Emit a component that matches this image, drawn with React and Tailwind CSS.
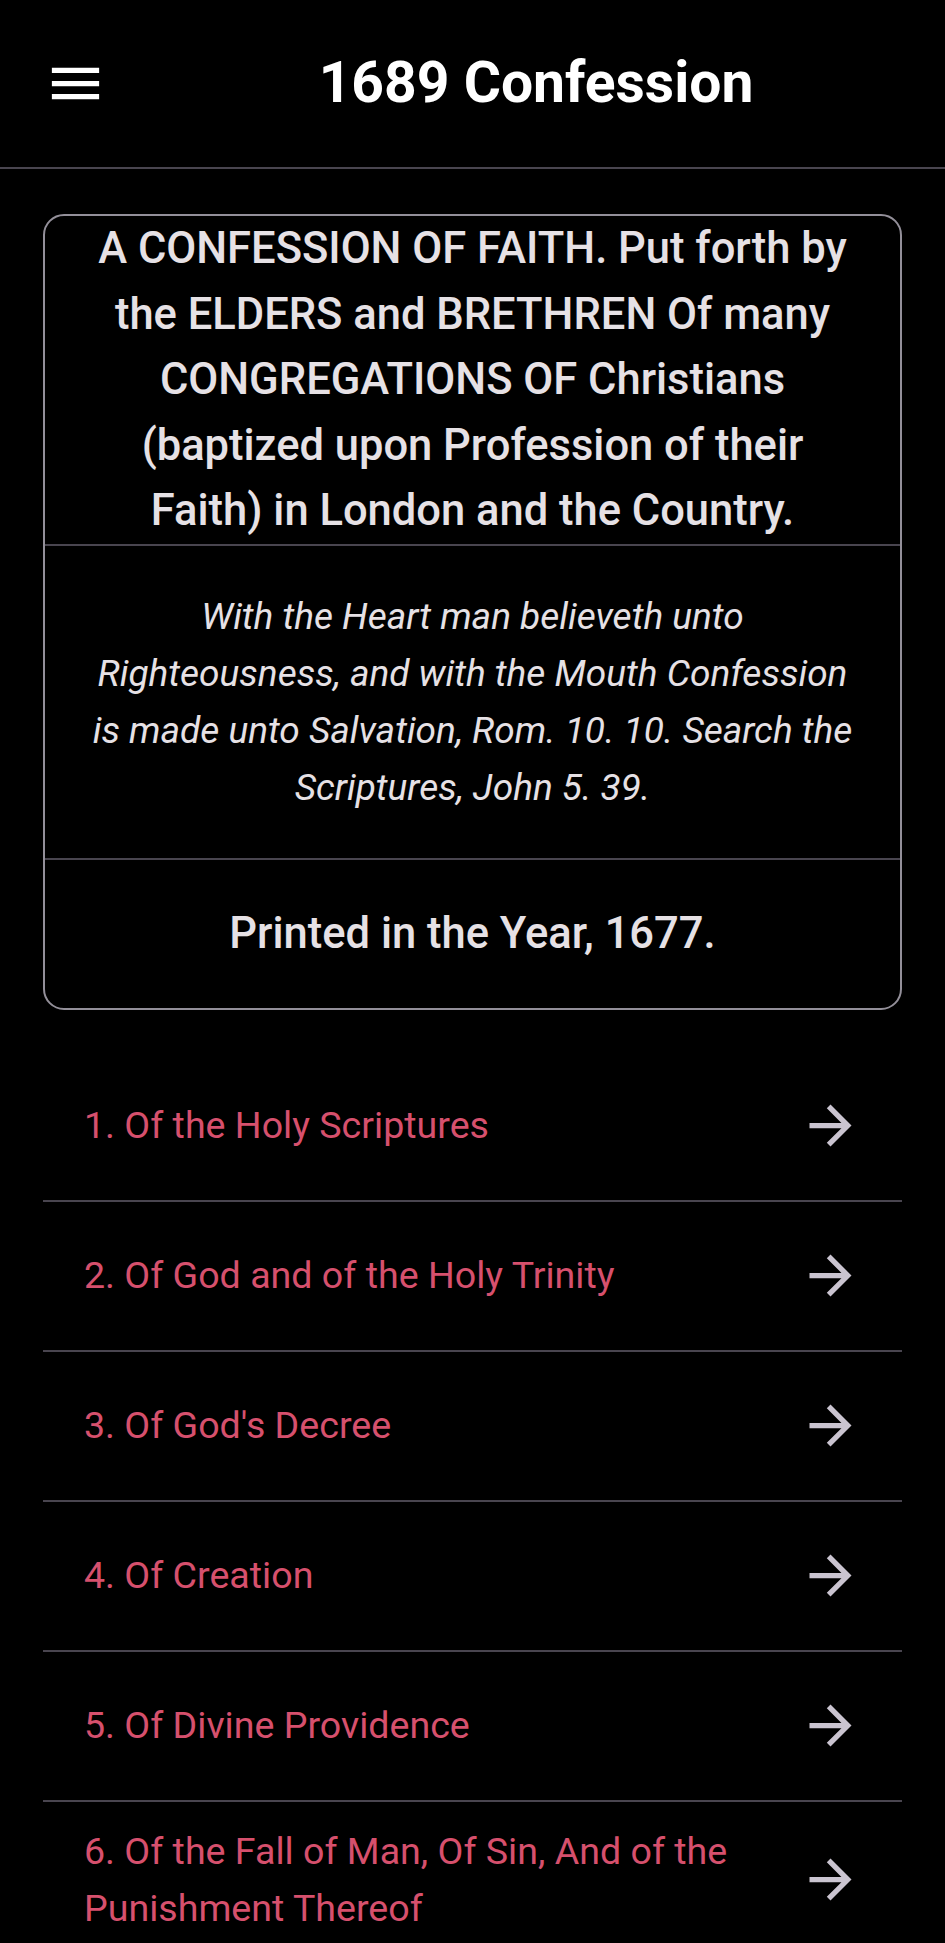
import React from "react";

const items = [
  "1. Of the Holy Scriptures",
  "2. Of God and of the Holy Trinity",
  "3. Of God's Decree",
  "4. Of Creation",
  "5. Of Divine Providence",
  "6. Of the Fall of Man, Of Sin, And of the Punishment Thereof",
];

function MenuIcon() {
  return (
    <svg viewBox="0 0 24 24" className="w-[63px] h-[63px]" fill="#ffffff">
      <path d="M3 18h18v-2H3v2zm0-5h18v-2H3v2zm0-7v2h18V6H3z" />
    </svg>
  );
}

function ArrowIcon() {
  return (
    <svg viewBox="0 0 24 24" className="w-[63px] h-[63px] shrink-0" fill="#CAC4D0">
      <path d="M12 4l-1.41 1.41L16.17 11H4v2h12.17l-5.58 5.59L12 20l8-8z" />
    </svg>
  );
}

export default function App() {
  return (
    <div
      className="h-[1943px] overflow-hidden bg-black text-[#E6E1E5]"
      style={{ fontFamily: "Roboto, 'Noto Sans', sans-serif" }}
    >
      <header className="flex items-center h-[169px] border-b-2 border-[#49454F]">
        <div className="w-[127px] pl-[44px] flex items-center">
          <MenuIcon />
        </div>
        <h1 className="flex-1 text-center text-white text-[57px] font-bold leading-none pb-[2px]">
          1689 Confession
        </h1>
      </header>

      <div className="mx-[43px] mt-[45px] rounded-[21px] border-2 border-[#938F99] overflow-hidden">
        <div className="px-[44px] text-center text-[43.5px] leading-[65.5px] font-medium border-b-2 border-[#49454F]">
          A CONFESSION OF FAITH. Put forth by the ELDERS and BRETHREN Of many CONGREGATIONS OF
          Christians (baptized upon Profession of their Faith) in London and the Country.
        </div>
        <div className="p-[42px] text-center italic text-[37px] leading-[57px] border-b-2 border-[#49454F]">
          With the Heart man believeth unto Righteousness, and with the Mouth Confession is made
          unto Salvation, Rom. 10. 10. Search the Scriptures, John 5. 39.
        </div>
        <div className="px-[42px] py-[41px] text-center text-[43.5px] leading-[66px] font-medium">
          Printed in the Year, 1677.
        </div>
      </div>

      <div className="mx-[43px] mt-[42px]">
        {items.map((t) => (
          <div
            key={t}
            className="flex items-center min-h-[150px] border-b-2 border-[#49454F] pl-[41px] pr-[40px]"
          >
            <div className="flex-1 py-[21px] pr-[40px] text-[37.6px] leading-[57px] text-[#D6506D]">
              {t}
            </div>
            <ArrowIcon />
          </div>
        ))}
      </div>
    </div>
  );
}
